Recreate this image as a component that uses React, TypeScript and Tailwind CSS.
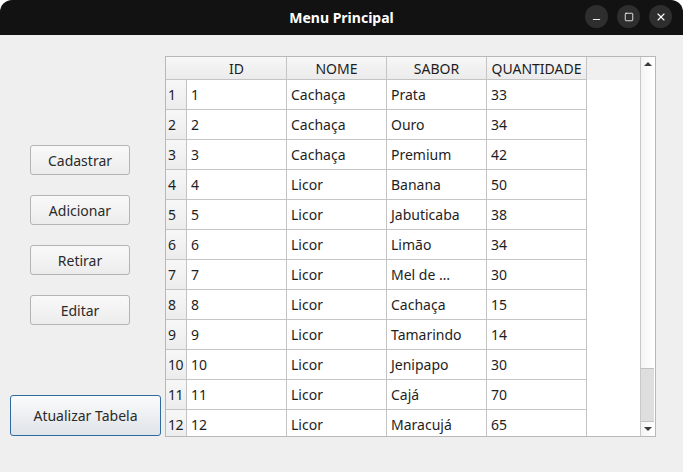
import { Minus, Square, X } from 'lucide-react';

type Row = { id: number; nome: string; sabor: string; qtd: number };

const ROWS: Row[] = [
  { id: 1, nome: 'Cachaça', sabor: 'Prata', qtd: 33 },
  { id: 2, nome: 'Cachaça', sabor: 'Ouro', qtd: 34 },
  { id: 3, nome: 'Cachaça', sabor: 'Premium', qtd: 42 },
  { id: 4, nome: 'Licor', sabor: 'Banana', qtd: 50 },
  { id: 5, nome: 'Licor', sabor: 'Jabuticaba', qtd: 38 },
  { id: 6, nome: 'Licor', sabor: 'Limão', qtd: 34 },
  { id: 7, nome: 'Licor', sabor: 'Mel de …', qtd: 30 },
  { id: 8, nome: 'Licor', sabor: 'Cachaça', qtd: 15 },
  { id: 9, nome: 'Licor', sabor: 'Tamarindo', qtd: 14 },
  { id: 10, nome: 'Licor', sabor: 'Jenipapo', qtd: 30 },
  { id: 11, nome: 'Licor', sabor: 'Cajá', qtd: 70 },
  { id: 12, nome: 'Licor', sabor: 'Maracujá', qtd: 65 },
];

const HEADERS = ['ID', 'NOME', 'SABOR', 'QUANTIDADE'];

function SideButton({ label }: { label: string }) {
  return (
    <button className="h-[30px] w-[100px] rounded-[3px] border border-[#b4b4b4] bg-gradient-to-b from-[#f9f9f9] to-[#ececec] text-[14px] text-[#2a2a2a]">
      {label}
    </button>
  );
}

function WinButton({ children }: { children: React.ReactNode }) {
  return (
    <div className="flex h-[23px] w-[23px] items-center justify-center rounded-full bg-[#2e2e2e] text-white">
      {children}
    </div>
  );
}

function Cell({ children }: { children?: React.ReactNode }) {
  return (
    <div className="flex h-[30px] items-center border-r border-b border-[#c4c4c4] bg-white pl-[4px] text-[14px] text-[#1e1e1e]">
      {children}
    </div>
  );
}

export default function App() {
  return (
    <div
      className="flex h-[472px] w-[683px] flex-col overflow-hidden bg-white"
      style={{ fontFamily: '"Noto Sans", "Open Sans", sans-serif' }}
    >
      {/* title bar */}
      <div className="relative flex h-[35px] shrink-0 items-center justify-center rounded-t-[12px] bg-[#121212]">
        <span className="text-[14px] font-bold text-white">Menu Principal</span>
        <div className="absolute right-[11px] top-[5px] flex gap-[9px]">
          <WinButton>
            <Minus size={11} strokeWidth={2} className="mt-[5px]" />
          </WinButton>
          <WinButton>
            <Square size={10} strokeWidth={2} />
          </WinButton>
          <WinButton>
            <X size={12} strokeWidth={2.2} />
          </WinButton>
        </div>
      </div>

      {/* body */}
      <div className="flex flex-1 bg-[#efefef]">
        <div className="flex w-[165px] flex-col items-start pt-[110px]">
          <div className="ml-[30px] flex flex-col gap-[20px]">
            <SideButton label="Cadastrar" />
            <SideButton label="Adicionar" />
            <SideButton label="Retirar" />
            <SideButton label="Editar" />
          </div>
          <button className="ml-[10px] mt-[70px] h-[41px] w-[151px] rounded-[3px] border border-[#2f6a9e] bg-gradient-to-b from-[#fbfbfb] to-[#dfe4e9] text-[14px] text-[#2a2a2a]">
            Atualizar Tabela
          </button>
        </div>

        <div className="mt-[21px] flex h-[381px] w-[491px] border border-[#b8b8b8] bg-white">
          <div className="h-full w-[474px] overflow-hidden">
            <div className="grid grid-cols-[21px_100px_100px_100px_100px_1fr]">
              <div className="h-[23px] border-b border-[#c4c4c4] bg-gradient-to-b from-[#f7f7f7] to-[#ebebeb]" />
              {HEADERS.map((h) => (
                <div
                  key={h}
                  className="flex h-[23px] items-center justify-center border-r border-b border-[#c4c4c4] bg-gradient-to-b from-[#f7f7f7] to-[#ebebeb] text-[14px] text-[#1e1e1e]"
                >
                  {h}
                </div>
              ))}
              <div className="h-[23px] bg-[#f0f0f0]" />
              {ROWS.map((r) => (
                <div key={r.id} className="contents">
                  <div className="flex h-[30px] items-center border-r border-b border-[#c4c4c4] bg-gradient-to-b from-[#f7f7f7] to-[#ececec] pl-[2px] text-[14px] tracking-[-0.5px] text-[#1e1e1e]">
                    {r.id}
                  </div>
                  <Cell>{r.id}</Cell>
                  <Cell>{r.nome}</Cell>
                  <Cell>{r.sabor}</Cell>
                  <Cell>{r.qtd}</Cell>
                  <div className="h-[30px] bg-white" />
                </div>
              ))}
            </div>
          </div>

          {/* scrollbar */}
          <div className="flex h-full w-[14px] flex-col border-l border-[#c8c8c8] bg-gradient-to-r from-[#f4f4f4] to-white">
            <div className="flex h-[14px] items-center justify-center">
              <div className="h-0 w-0 border-x-[4px] border-b-[4px] border-x-transparent border-b-[#3a3a3a]" />
            </div>
            <div className="flex-1" />
            <div className="h-[54px] border-y border-[#c0c0c0] bg-[#dedede]" />
            <div className="flex h-[14px] items-center justify-center">
              <div className="h-0 w-0 border-x-[4px] border-t-[4px] border-x-transparent border-t-[#3a3a3a]" />
            </div>
          </div>
        </div>
      </div>
    </div>
  );
}
